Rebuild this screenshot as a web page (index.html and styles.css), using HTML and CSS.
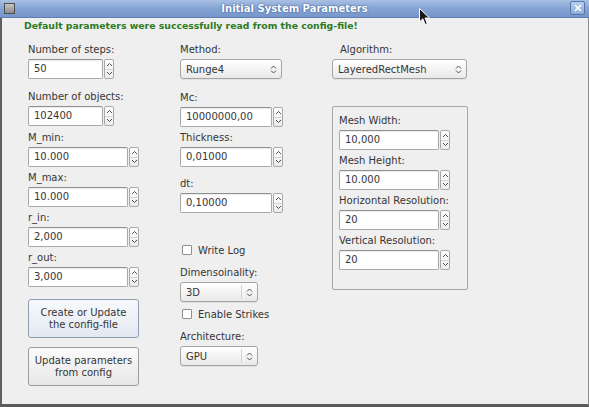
FILE: index.html
```html
<!DOCTYPE html>
<html>
<head>
<meta charset="utf-8">
<link rel="stylesheet" href="styles.css">
</head>
<body>
<div class="window">
  <div class="titlebar">
    <span class="win-icon"></span>
    <span class="title">Initial System Parameters</span>
    <span class="close-btn"><svg width="8" height="8" viewBox="0 0 8 8"><path d="M1 1 L7 7 M7 1 L1 7" stroke="#ffffff" stroke-width="1.6" fill="none"/></svg></span>
  </div>
  <div class="content">
    <div class="message">Default parameters were successfully read from the config-file!</div>
    <div class="columns">
      <div class="col col1">
        <div class="field">
          <div class="label">Number of steps:</div>
          <div class="spin w86"><div class="spin-text">50</div><div class="spin-arrows"><span class="arr"><svg width="7" height="5" viewBox="0 0 7 5"><path d="M1 4 L3.5 1.5 L6 4" stroke="#505050" fill="none"/></svg></span><span class="arr"><svg width="7" height="5" viewBox="0 0 7 5"><path d="M1 1 L3.5 3.5 L6 1" stroke="#505050" fill="none"/></svg></span></div></div>
        </div>
        <div class="field mt12">
          <div class="label">Number of objects:</div>
          <div class="spin w86"><div class="spin-text">102400</div><div class="spin-arrows"><span class="arr"><svg width="7" height="5" viewBox="0 0 7 5"><path d="M1 4 L3.5 1.5 L6 4" stroke="#505050" fill="none"/></svg></span><span class="arr"><svg width="7" height="5" viewBox="0 0 7 5"><path d="M1 1 L3.5 3.5 L6 1" stroke="#505050" fill="none"/></svg></span></div></div>
        </div>
        <div class="field mt6">
          <div class="label">M_min:</div>
          <div class="spin w111"><div class="spin-text">10.000</div><div class="spin-arrows"><span class="arr"><svg width="7" height="5" viewBox="0 0 7 5"><path d="M1 4 L3.5 1.5 L6 4" stroke="#505050" fill="none"/></svg></span><span class="arr"><svg width="7" height="5" viewBox="0 0 7 5"><path d="M1 1 L3.5 3.5 L6 1" stroke="#505050" fill="none"/></svg></span></div></div>
        </div>
        <div class="field mt5">
          <div class="label">M_max:</div>
          <div class="spin w111"><div class="spin-text">10.000</div><div class="spin-arrows"><span class="arr"><svg width="7" height="5" viewBox="0 0 7 5"><path d="M1 4 L3.5 1.5 L6 4" stroke="#505050" fill="none"/></svg></span><span class="arr"><svg width="7" height="5" viewBox="0 0 7 5"><path d="M1 1 L3.5 3.5 L6 1" stroke="#505050" fill="none"/></svg></span></div></div>
        </div>
        <div class="field mt5">
          <div class="label">r_in:</div>
          <div class="spin w111"><div class="spin-text">2,000</div><div class="spin-arrows"><span class="arr"><svg width="7" height="5" viewBox="0 0 7 5"><path d="M1 4 L3.5 1.5 L6 4" stroke="#505050" fill="none"/></svg></span><span class="arr"><svg width="7" height="5" viewBox="0 0 7 5"><path d="M1 1 L3.5 3.5 L6 1" stroke="#505050" fill="none"/></svg></span></div></div>
        </div>
        <div class="field mt5">
          <div class="label">r_out:</div>
          <div class="spin w111"><div class="spin-text">3,000</div><div class="spin-arrows"><span class="arr"><svg width="7" height="5" viewBox="0 0 7 5"><path d="M1 4 L3.5 1.5 L6 4" stroke="#505050" fill="none"/></svg></span><span class="arr"><svg width="7" height="5" viewBox="0 0 7 5"><path d="M1 1 L3.5 3.5 L6 1" stroke="#505050" fill="none"/></svg></span></div></div>
        </div>
        <div class="button default mt12">Create or Update<br>the config-file</div>
        <div class="button mt9">Update parameters<br>from config</div>
      </div>

      <div class="col col2">
        <div class="field">
          <div class="label">Method:</div>
          <div class="combo w102"><span class="combo-text">Runge4</span><span class="combo-arrow"><svg width="7" height="9" viewBox="0 0 7 9"><path d="M1 3.5 L3.5 1 L6 3.5 M1 5.5 L3.5 8 L6 5.5" stroke="#505050" fill="none"/></svg></span></div>
        </div>
        <div class="field mt13">
          <div class="label">Mc:</div>
          <div class="spin w103"><div class="spin-text">10000000,00</div><div class="spin-arrows"><span class="arr"><svg width="7" height="5" viewBox="0 0 7 5"><path d="M1 4 L3.5 1.5 L6 4" stroke="#505050" fill="none"/></svg></span><span class="arr"><svg width="7" height="5" viewBox="0 0 7 5"><path d="M1 1 L3.5 3.5 L6 1" stroke="#505050" fill="none"/></svg></span></div></div>
        </div>
        <div class="field mt5">
          <div class="label">Thickness:</div>
          <div class="spin w103"><div class="spin-text">0,01000</div><div class="spin-arrows"><span class="arr"><svg width="7" height="5" viewBox="0 0 7 5"><path d="M1 4 L3.5 1.5 L6 4" stroke="#505050" fill="none"/></svg></span><span class="arr"><svg width="7" height="5" viewBox="0 0 7 5"><path d="M1 1 L3.5 3.5 L6 1" stroke="#505050" fill="none"/></svg></span></div></div>
        </div>
        <div class="field mt11">
          <div class="label">dt:</div>
          <div class="spin w103"><div class="spin-text">0,10000</div><div class="spin-arrows"><span class="arr"><svg width="7" height="5" viewBox="0 0 7 5"><path d="M1 4 L3.5 1.5 L6 4" stroke="#505050" fill="none"/></svg></span><span class="arr"><svg width="7" height="5" viewBox="0 0 7 5"><path d="M1 1 L3.5 3.5 L6 1" stroke="#505050" fill="none"/></svg></span></div></div>
        </div>
        <div class="check mt30"><span class="box"></span><span>Write Log</span></div>
        <div class="field mt10">
          <div class="label">Dimensoinality:</div>
          <div class="combo w78 sep"><span class="combo-text">3D</span><span class="combo-arrow"><svg width="7" height="9" viewBox="0 0 7 9"><path d="M1 3.5 L3.5 1 L6 3.5 M1 5.5 L3.5 8 L6 5.5" stroke="#505050" fill="none"/></svg></span></div>
        </div>
        <div class="check mt5"><span class="box"></span><span>Enable Strikes</span></div>
        <div class="field mt10">
          <div class="label">Architecture:</div>
          <div class="combo w78 sep"><span class="combo-text">GPU</span><span class="combo-arrow"><svg width="7" height="9" viewBox="0 0 7 9"><path d="M1 3.5 L3.5 1 L6 3.5 M1 5.5 L3.5 8 L6 5.5" stroke="#505050" fill="none"/></svg></span></div>
        </div>
      </div>

      <div class="col col3">
        <div class="field">
          <div class="label indent">Algorithm:</div>
          <div class="combo w135"><span class="combo-text">LayeredRectMesh</span><span class="combo-arrow"><svg width="7" height="9" viewBox="0 0 7 9"><path d="M1 3.5 L3.5 1 L6 3.5 M1 5.5 L3.5 8 L6 5.5" stroke="#505050" fill="none"/></svg></span></div>
        </div>
        <div class="group">
          <div class="field">
            <div class="label">Mesh Width:</div>
            <div class="spin w111"><div class="spin-text">10,000</div><div class="spin-arrows"><span class="arr"><svg width="7" height="5" viewBox="0 0 7 5"><path d="M1 4 L3.5 1.5 L6 4" stroke="#505050" fill="none"/></svg></span><span class="arr"><svg width="7" height="5" viewBox="0 0 7 5"><path d="M1 1 L3.5 3.5 L6 1" stroke="#505050" fill="none"/></svg></span></div></div>
          </div>
          <div class="field mt5">
            <div class="label">Mesh Height:</div>
            <div class="spin w111"><div class="spin-text">10.000</div><div class="spin-arrows"><span class="arr"><svg width="7" height="5" viewBox="0 0 7 5"><path d="M1 4 L3.5 1.5 L6 4" stroke="#505050" fill="none"/></svg></span><span class="arr"><svg width="7" height="5" viewBox="0 0 7 5"><path d="M1 1 L3.5 3.5 L6 1" stroke="#505050" fill="none"/></svg></span></div></div>
          </div>
          <div class="field mt5">
            <div class="label">Horizontal Resolution:</div>
            <div class="spin w111"><div class="spin-text">20</div><div class="spin-arrows"><span class="arr"><svg width="7" height="5" viewBox="0 0 7 5"><path d="M1 4 L3.5 1.5 L6 4" stroke="#505050" fill="none"/></svg></span><span class="arr"><svg width="7" height="5" viewBox="0 0 7 5"><path d="M1 1 L3.5 3.5 L6 1" stroke="#505050" fill="none"/></svg></span></div></div>
          </div>
          <div class="field mt5">
            <div class="label">Vertical Resolution:</div>
            <div class="spin w111"><div class="spin-text">20</div><div class="spin-arrows"><span class="arr"><svg width="7" height="5" viewBox="0 0 7 5"><path d="M1 4 L3.5 1.5 L6 4" stroke="#505050" fill="none"/></svg></span><span class="arr"><svg width="7" height="5" viewBox="0 0 7 5"><path d="M1 1 L3.5 3.5 L6 1" stroke="#505050" fill="none"/></svg></span></div></div>
          </div>
        </div>
      </div>
    </div>
  </div>
  <svg class="cursor" width="12" height="18" viewBox="0 0 12 18"><path d="M0.5 0.5 L0.5 14 L3.8 10.8 L6.2 16.5 L8.3 15.6 L6 10 L10.5 10 Z" fill="#1a1a1a" stroke="#ffffff" stroke-width="1"/></svg>
</div>
</body>
</html>
```

FILE: styles.css
```css
* { box-sizing: border-box; }
html, body { margin: 0; padding: 0; }
body {
  width: 589px;
  height: 407px;
  overflow: hidden;
  background: #efefef;
  font-family: "DejaVu Sans", sans-serif;
  font-size: 10px;
  color: #353535;
}
.window {
  position: relative;
  width: 589px;
  height: 407px;
  background: #efefef;
  border-left: 2px solid #5f5f5f;
  border-bottom: 3px solid #5a5a5a;
  border-right: 1px solid #8c8c8c;
  display: flex;
  flex-direction: column;
}
.titlebar {
  height: 18px;
  flex: none;
  display: flex;
  align-items: center;
  justify-content: center;
  position: relative;
  background: linear-gradient(to bottom, #a9c0e2 0%, #87a6d6 45%, #7696cb 100%);
  border-bottom: 1px solid #5f7fb4;
  margin-left: -2px;
  margin-right: -1px;
}
.title {
  font-weight: bold;
  font-size: 10px;
  color: #ffffff;
  text-shadow: 0 0 2px #3d5f93, 0 0 1px #3d5f93;
}
.win-icon {
  position: absolute;
  left: 4px;
  top: 3px;
  width: 11px;
  height: 11px;
  border: 1px solid #4e4e4e;
  background: linear-gradient(#c4c4c4, #8d8d8d);
}
.close-btn {
  position: absolute;
  right: 4px;
  top: 1px;
  width: 15px;
  height: 14px;
  border: 1px solid #5677ac;
  border-radius: 2px;
  background: linear-gradient(#b9cdea, #8eabd8);
  display: flex;
  align-items: center;
  justify-content: center;
}
.content {
  flex: 1;
  padding-top: 2px;
}
.message {
  margin-left: 22px;
  height: 12px;
  line-height: 12px;
  font-weight: bold;
  font-size: 9.3px;
  color: #2e7a1f;
}
.columns {
  display: flex;
  margin-top: 12px;
  margin-left: 26px;
}
.col { display: flex; flex-direction: column; flex: none; }
.col1 { width: 152px; }
.col2 { width: 152px; }
.col3 { width: 137px; }
.label {
  height: 12px;
  line-height: 12px;
  margin-bottom: 3px;
  white-space: nowrap;
}
.label.indent { margin-left: 8px; }
.mt5 { margin-top: 5px; }
.mt6 { margin-top: 6px; }
.mt9 { margin-top: 9px; }
.mt10 { margin-top: 10px; }
.mt11 { margin-top: 11px; }
.mt12 { margin-top: 12px; }
.mt13 { margin-top: 13px; }
.mt30 { margin-top: 30px; }

.spin {
  display: flex;
  height: 20px;
  gap: 1px;
}
.w86 { width: 86px; }
.w111 { width: 111px; }
.w103 { width: 103px; }
.w102 { width: 102px; }
.w78 { width: 78px; }
.w135 { width: 135px; }
.spin-text {
  flex: 1;
  background: #ffffff;
  border: 1px solid #a9a9a9;
  border-top-color: #8f8f8f;
  border-radius: 2px;
  box-shadow: inset 0 1px 1px rgba(0,0,0,0.08);
  padding-left: 5px;
  line-height: 18px;
  color: #353535;
}
.spin-arrows {
  width: 10px;
  display: flex;
  flex-direction: column;
  border: 1px solid #a9a9a9;
  border-radius: 2px;
  background: linear-gradient(#ffffff, #ececec);
}
.arr {
  flex: 1;
  display: flex;
  align-items: center;
  justify-content: center;
}
.arr + .arr { border-top: 1px solid #d6d6d6; }

.combo {
  height: 20px;
  display: flex;
  align-items: center;
  border: 1px solid #a4a4a4;
  border-radius: 3px;
  background: linear-gradient(#ffffff, #e9e9e9);
  box-shadow: 0 1px 0 rgba(0,0,0,0.05);
}
.combo-text { flex: 1; padding-left: 5px; }
.combo-arrow {
  width: 16px;
  height: 14px;
  display: flex;
  align-items: center;
  justify-content: center;
}
.combo.sep .combo-arrow { border-left: 1px solid #d2d2d2; }

.check {
  height: 14px;
  display: flex;
  align-items: center;
  gap: 6px;
  padding-left: 2px;
}
.check .box {
  width: 10px;
  height: 10px;
  border: 1px solid #8e8e8e;
  background: #ffffff;
  border-radius: 1px;
}

.button {
  width: 111px;
  height: 39px;
  border: 1px solid #9c9c9c;
  border-radius: 3px;
  background: linear-gradient(#fbfbfb, #e7e7e7);
  display: flex;
  align-items: center;
  justify-content: center;
  text-align: center;
  line-height: 12px;
}
.button.default {
  border-color: #8f9db3;
  background: linear-gradient(#f7f9fc, #e3e9f1);
}

.group {
  margin-top: 27px;
  width: 136px;
  border: 1px solid #a6a6a6;
  border-radius: 2px;
  padding: 8px 6px 19px 6px;
}
.cursor {
  position: absolute;
  left: 417px;
  top: 8px;
}
```
